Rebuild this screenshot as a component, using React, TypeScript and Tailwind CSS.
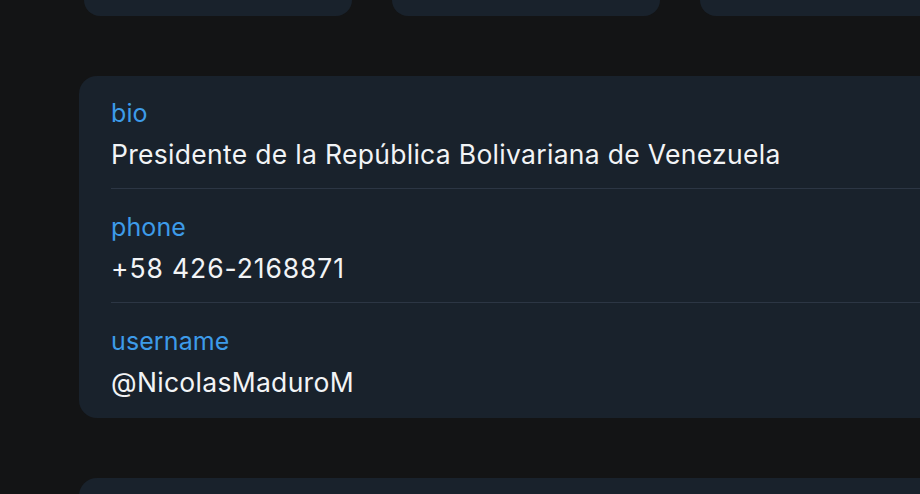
import React from "react";

const rows = [
  { label: "bio", value: "Presidente de la República Bolivariana de Venezuela", track: "tracking-[0.3px]" },
  { label: "phone", value: "+58 426-2168871", track: "tracking-[0.9px]" },
  { label: "username", value: "@NicolasMaduroM", track: "tracking-[0.3px]" },
];

export default function App() {
  return (
    <div
      className="w-[920px] h-[494px] overflow-hidden bg-[#131415] relative"
      style={{ fontFamily: "Inter, 'Noto Sans', sans-serif" }}
    >
      <div className="flex gap-[40px] pl-[84px] h-[16px]">
        <div className="w-[268px] h-[16px] shrink-0 rounded-b-[16px] bg-[#19222c]" />
        <div className="w-[268px] h-[16px] shrink-0 rounded-b-[16px] bg-[#19222c]" />
        <div className="w-[268px] h-[16px] shrink-0 rounded-b-[16px] bg-[#19222c]" />
      </div>
      <div className="ml-[79px] mt-[60px] w-[900px] h-[342px] rounded-[18px] bg-[#19222c] pl-[32px] pt-[22px]">
        {rows.map((r, i) => (
          <div key={r.label}>
            <div className="text-[25px] leading-[30px] tracking-[0.1px] text-[#3d9be9]">{r.label}</div>
            <div className={`text-[26.5px] leading-[34px] mt-[9px] text-[#f2f4f6] ${r.track}`}>{r.value}</div>
            {i < 2 && <div className="mt-[17px] mb-[23px] h-px bg-[#2c3644]" />}
          </div>
        ))}
      </div>
      <div className="ml-[79px] mt-[60px] w-[900px] h-[40px] rounded-t-[18px] bg-[#19222c]" />
    </div>
  );
}
